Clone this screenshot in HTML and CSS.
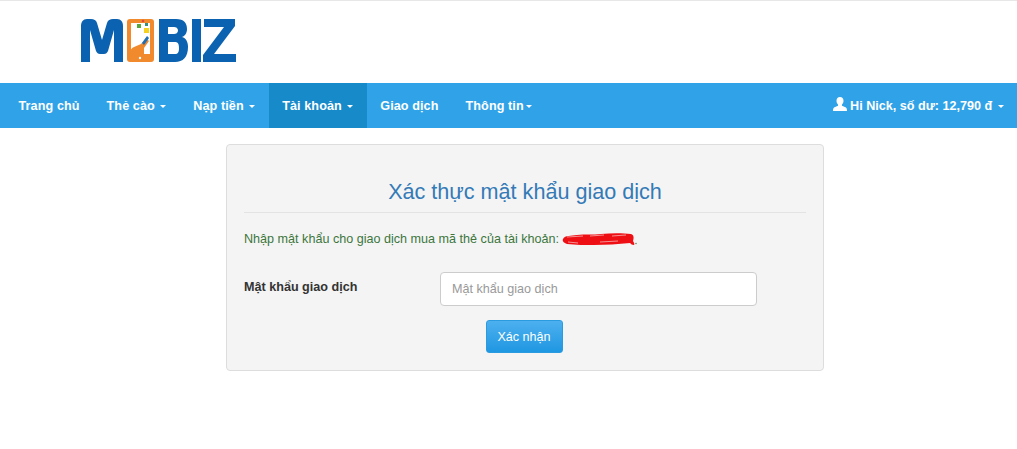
FILE: index.html
```html
<!DOCTYPE html>
<html lang="vi">
<head>
<meta charset="utf-8">
<title>Mobiz</title>
<link rel="stylesheet" href="styles.css">
</head>
<body>
<header class="brand">
  <svg class="logo" width="158" height="48" viewBox="0 0 158 48" role="img" aria-label="MBIZ">
    <path d="M1 46V10c0-4 2-7 6-7h4c3 0 5 1 6 4l5 17 5-17c1-3 3-4 6-4h4c4 0 6 3 6 7v36h-9V14l-6 21c-1 2-2 3-4 3h-4c-2 0-3-1-4-3l-6-21v32z" fill="#0a62b0"/>
    <rect x="47" y="3" width="27" height="43" rx="3" fill="#f08a2c"/>
    <path d="M51 7h19v31H51z" fill="#fff"/>
    <path d="M50 42c-1-5 0-9 4-11l7-3 5-6 3 3-5 7v7h-6l-1 3z" fill="#f08a2c"/>
    <path d="M62 27l5-7 2 2-5 7z" fill="#1d6fb8"/>
    <rect x="64" y="12" width="5" height="5" fill="#f6d21f"/>
    <rect x="57" y="8" width="4" height="4" fill="#55a83c"/>
    <rect x="65" y="7" width="3" height="3" fill="#3a8f7c"/>
    <circle cx="63" cy="5" r="1.300" fill="#e0483a"/>
    <circle cx="60" cy="42" r="1.200" fill="#fff"/>
    <path d="M79 3h17c8 0 11 4 11 10 0 4-2 7-5 8 4 1 6 5 6 10 0 10-5 15-13 15H79zm9 8v7h6c2 0 4-1 4-3.500S96 11 94 11zm0 15v12h7c3 0 4-2 4-6S98 26 95 26z" fill="#0a62b0"/>
    <rect x="112" y="3" width="9" height="43" fill="#0a62b0"/>
    <path d="M124 3h31v7l-21 28h22v8h-33v-7l21-28h-20z" fill="#0a62b0"/>
  </svg>
</header>
<nav class="navbar">
  <ul class="nav">
    <li class="nav-item">Trang chủ</li>
    <li class="nav-item">Thẻ cào <span class="caret"></span></li>
    <li class="nav-item">Nạp tiền <span class="caret"></span></li>
    <li class="nav-item active">Tài khoản <span class="caret"></span></li>
    <li class="nav-item">Giao dịch</li>
    <li class="nav-item">Thông tin<span class="caret"></span></li>
  </ul>
  <div class="nav-item user">
    <svg class="user-icon" width="14" height="14" viewBox="0 0 14 14"><path d="M7 0c2.200 0 3.500 1.600 3.500 3.800 0 1.600-.7 3-1.500 3.700v1.200l3.500 1.500c1 .5 1.500 1.500 1.500 3.800H0c0-2.300.5-3.300 1.500-3.800L5 8.700V7.500C4.200 6.800 3.500 5.400 3.500 3.800 3.500 1.600 4.800 0 7 0z" fill="#fff"/></svg>
    Hi Nick, số dư: 12,790 đ <span class="caret"></span>
  </div>
</nav>
<main class="page">
  <section class="panel">
    <h3 class="title">Xác thực mật khẩu giao dịch</h3>
    <p class="note">Nhập mật khẩu cho giao dịch mua mã thẻ của tài khoản:
      <svg class="scribble" width="78" height="18" viewBox="0 0 78 18"><path d="M3 9c2-4 8-3 14-4 8-1 16 0 24-1 10-1 22-1 30 0 3 1 3 4 2 7 1 2 2 3 1 4-2 0-3-1-4-2-12 1-24 2-36 2-9 0-18 0-27-1-3-1-5-3-4-5z" fill="#ee0f14"/><path d="M7 7l16-1M30 6l14-1M52 6l14-1M8 12l10 1M40 12l18-1" stroke="#f6b0b0" stroke-width="0.800" fill="none"/><circle cx="76" cy="13.500" r=".7" fill="#3c763d"/></svg></p>
    <form class="form">
      <div class="field">
        <label class="label" for="pw">Mật khẩu giao dịch</label>
        <input class="input" id="pw" type="text" placeholder="Mật khẩu giao dịch">
      </div>
      <div class="actions"><button class="btn" type="button">Xác nhận</button></div>
    </form>
  </section>
</main>
</body>
</html>
```
FILE: styles.css
```css
* { box-sizing: border-box; }
body { margin: 0; background: #fff; font-family: "Liberation Sans", Arial, sans-serif; font-size: 12.6px; color: #333; }
.brand { height: 83px; border-top: 1px solid #e7e7e7; padding: 15px 0 0 80px; }
.logo { display: block; }
.navbar { height: 45px; background: #30a3e8; display: flex; justify-content: space-between; color: #fff; font-weight: 700; }
.nav { display: flex; list-style: none; margin: 0; padding: 0 0 0 5px; }
.nav-item { padding: 0 13.500px; line-height: 46px; height: 45px; white-space: nowrap; }
.nav .nav-item { letter-spacing: .1px; }
.nav-item.active { background: #178aca; }
.caret { display: inline-block; width: 0; height: 0; margin-left: 1.800px; vertical-align: middle; border-top: 3.600px solid #fff; border-left: 3.600px solid transparent; border-right: 3.600px solid transparent; }
.user-icon { vertical-align: -1px; }
.page { padding-top: 16px; display: flex; justify-content: center; }
.panel { width: 598px; height: 227px; margin-left: 33px; background: #f4f4f4; border: 1px solid #ddd; border-radius: 4px; padding: 0 17px; }
.title { margin: 33px 0 0; padding-bottom: 7px; border-bottom: 1px solid #e3e3e3; text-align: center; font-size: 21.600px; font-weight: 400; line-height: 27px; color: #337ab7; }
.note { margin: 16px 0 0; color: #3c763d; font-size: 12.600px; line-height: 20px; display: flex; align-items: center; gap: 1px; }
.form { margin-top: 23px; }
.field { display: flex; align-items: flex-start; }
.label { width: 196px; font-weight: 700; line-height: 31px; }
.input { width: 317px; height: 34px; border: 1px solid #ccc; border-radius: 4px; padding: 6px 11px; font: 12.600px "Liberation Sans", Arial, sans-serif; background: #fff; }
.input::placeholder { color: #999; }
.actions { margin-top: 14px; display: flex; justify-content: center; padding-right: 2px; }
.btn { width: 77px; height: 33px; background: linear-gradient(#4db0ef, #1f97e2); color: #fff; border: 1px solid #2b9be0; border-radius: 3px; font: 12.600px "Liberation Sans", Arial, sans-serif; padding: 0; }
```
